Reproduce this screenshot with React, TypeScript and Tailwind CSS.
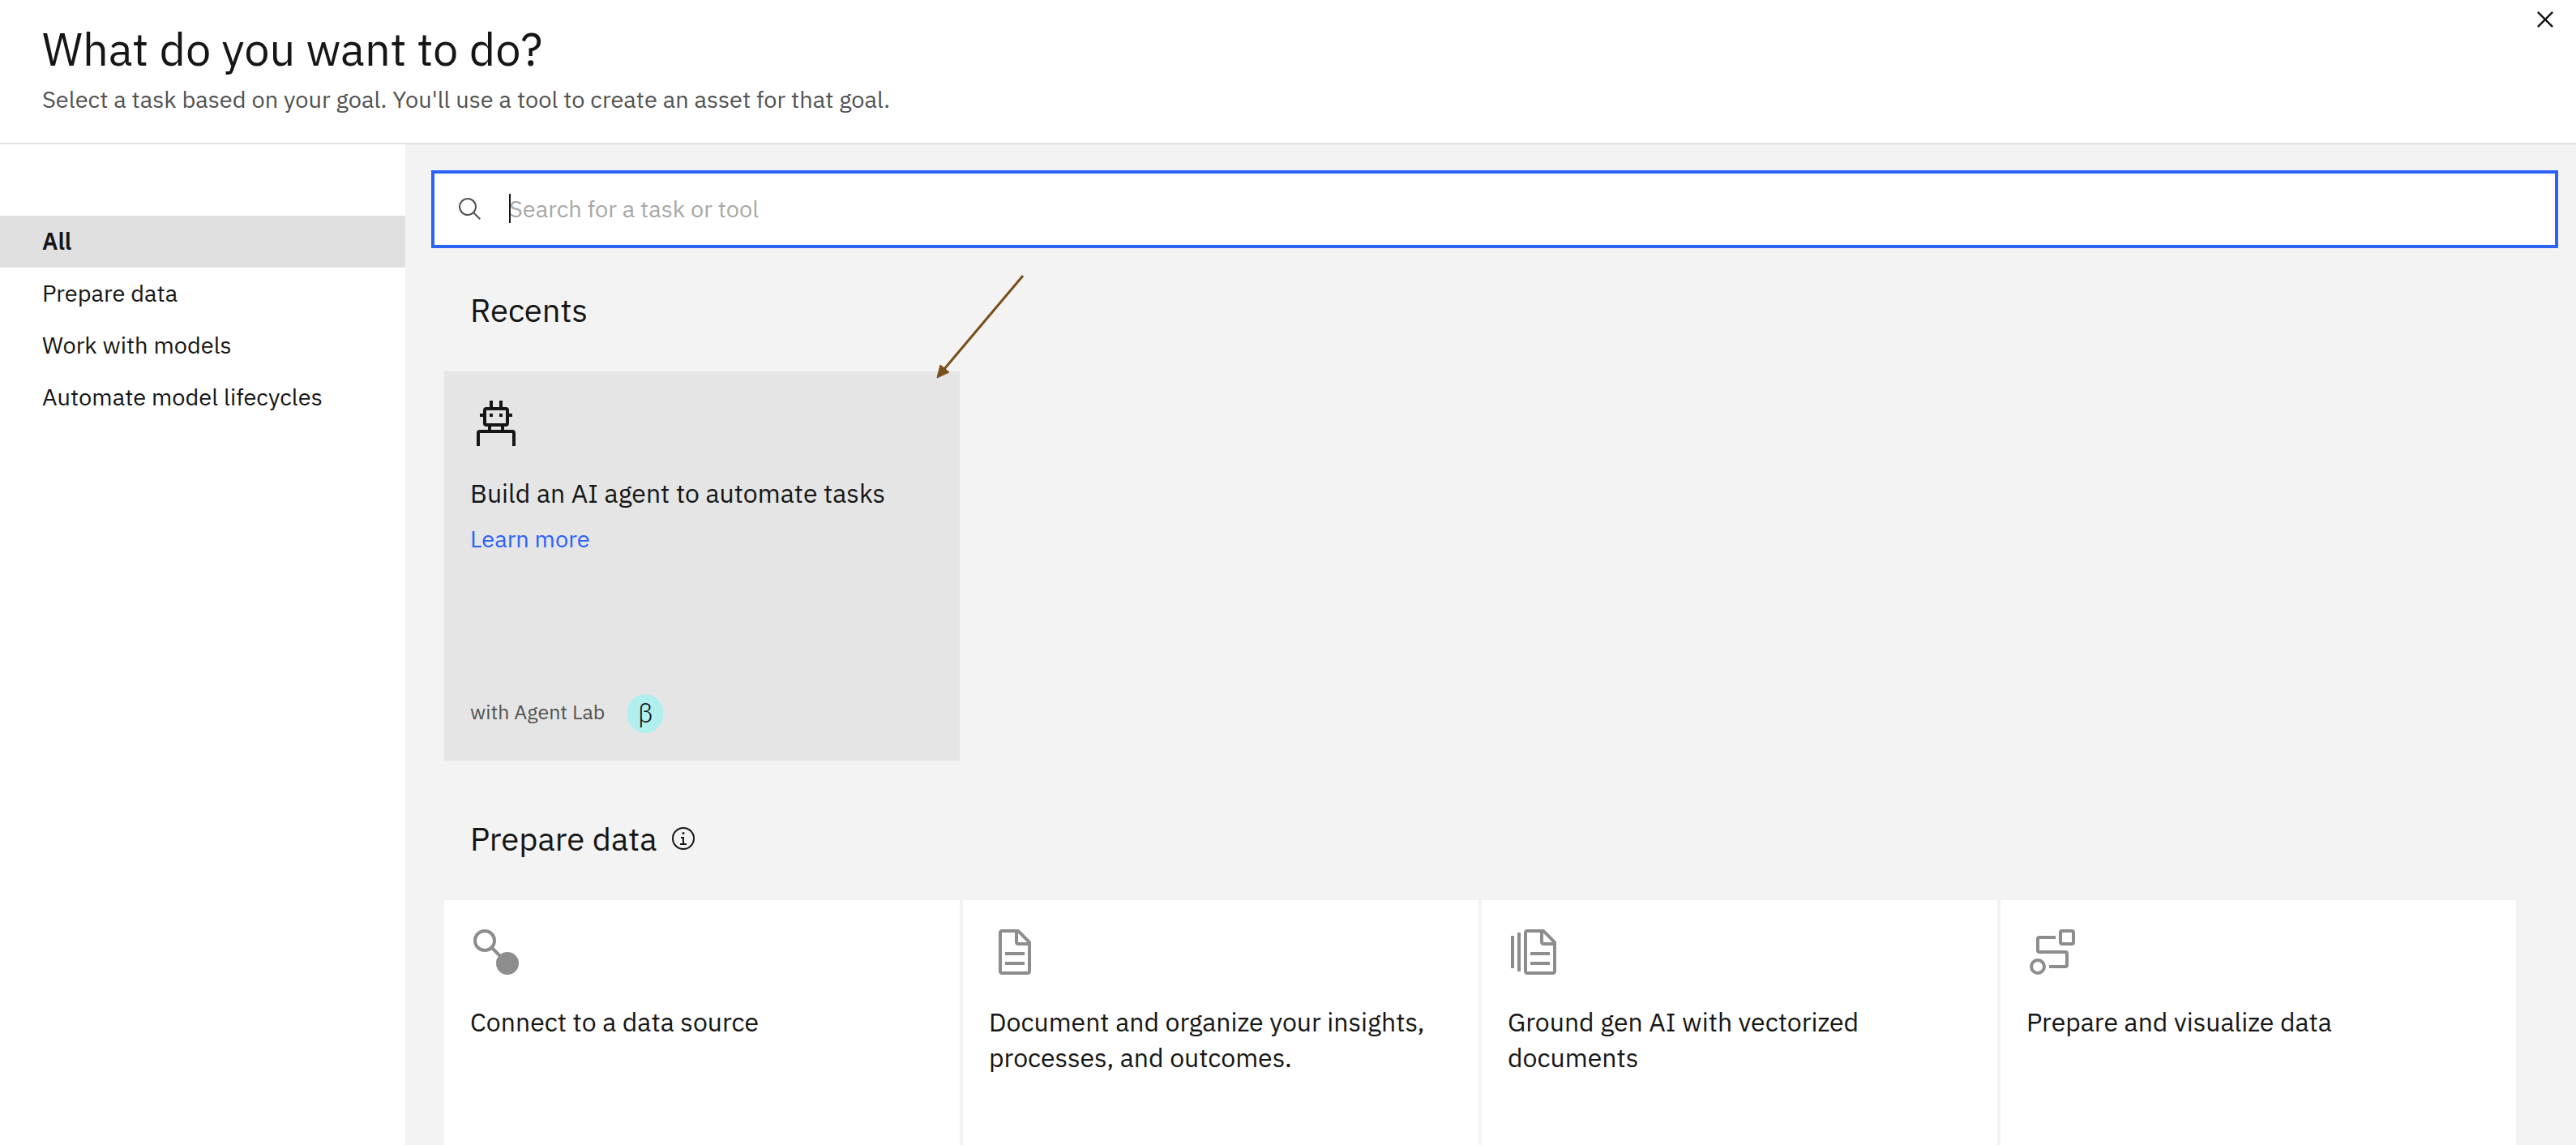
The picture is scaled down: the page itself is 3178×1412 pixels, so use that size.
import type { ReactNode } from "react";

function Icon({ className, children }: { className: string; children: ReactNode }) {
  return (
    <svg viewBox="0 0 32 32" fill="currentColor" aria-hidden="true" className={className}>
      {children}
    </svg>
  );
}

const agentIcon = (
  <Icon className="size-16 text-[#161616]">
    <path d="M12 2h2v4h-2zM18 2h2v4h-2zM6 10h2v2H6zM24 10h2v2h-2zM12 10h2v2h-2zM18 10h2v2h-2zM11 18h2v2h-2zM19 18h2v2h-2z" />
    <rect x="9" y="7" width="14" height="10" rx="1" fill="none" stroke="currentColor" strokeWidth="2" />
    <path d="M5 30v-8a1 1 0 0 1 1-1h20a1 1 0 0 1 1 1v8" fill="none" stroke="currentColor" strokeWidth="2" />
  </Icon>
);

const connectIcon = (
  <Icon className="size-16 text-[#8d8d8d]">
    <circle cx="9" cy="9" r="6" fill="none" stroke="currentColor" strokeWidth="2" />
    <path d="M13 13l6 6" stroke="currentColor" strokeWidth="2" />
    <circle cx="23" cy="23" r="7" />
  </Icon>
);

const pagePath =
  "M25.7 9.3l-7-7C18.5 2.1 18.3 2 18 2H8C6.9 2 6 2.9 6 4v24c0 1.1.9 2 2 2h16c1.1 0 2-.9 2-2V10c0-.3-.1-.5-.3-.7zM18 4.4l5.6 5.6H18V4.4zM24 28H8V4h8v6c0 1.1.9 2 2 2h6v16zM10 22h12v2H10zM10 16h12v2H10z";

const documentIcon = (
  <Icon className="size-16 text-[#8d8d8d]">
    <path d={pagePath} />
  </Icon>
);

const vectorIcon = (
  <Icon className="size-16 text-[#8d8d8d]">
    <path d="M2 6h2v20H2zM6 4h2v24H6z" />
    <path transform="translate(4 0)" d={pagePath} />
  </Icon>
);

const flowIcon = (
  <Icon className="size-16 text-[#8d8d8d]">
    <g fill="none" stroke="currentColor" strokeWidth="2">
      <rect x="21" y="3" width="8" height="8" rx="1" />
      <circle cx="7" cy="25" r="4" />
      <path d="M18 7H8a1 1 0 0 0-1 1v7a1 1 0 0 0 1 1h16a1 1 0 0 1 1 1v7a1 1 0 0 1-1 1H14" />
    </g>
  </Icon>
);

const categories = ["All", "Prepare data", "Work with models", "Automate model lifecycles"];

const prepareTasks = [
  { title: "Connect to a data source", icon: connectIcon },
  { title: "Document and organize your insights, processes, and outcomes.", icon: documentIcon },
  { title: "Ground gen AI with vectorized documents", icon: vectorIcon },
  { title: "Prepare and visualize data", icon: flowIcon },
];

function Pointer() {
  return (
    <svg
      viewBox="0 0 112 130"
      aria-hidden="true"
      className="pointer-events-none absolute -top-[120px] -right-[80px] h-[130px] w-[112px] text-[#784f17]"
    >
      <path d="M110 2L13 117" stroke="currentColor" strokeWidth="3" />
      <path d="M4 128L8 112L19 121Z" fill="currentColor" stroke="currentColor" />
    </svg>
  );
}

export default function App() {
  return (
    <div className="flex h-screen flex-col overflow-hidden bg-white font-['IBM_Plex_Sans',Roboto,sans-serif] text-[29px] leading-9 text-[#161616]">
      <header className="flex shrink-0 items-start justify-between border-b-2 border-[#e0e0e0]">
        <div className="flex flex-col gap-2 pt-6 pb-9 pl-[52px]">
          <h1 className="text-[56px] leading-[72px]">What do you want to do?</h1>
          <p className="text-[#525252]">
            Select a task based on your goal. You'll use a tool to create an asset for that goal.
          </p>
        </div>
        <button type="button" aria-label="Close" className="mt-1 mr-[18px]">
          <Icon className="size-10">
            <path d="M17.4 16L24 9.4 22.6 8 16 14.6 9.4 8 8 9.4l6.6 6.6L8 22.6 9.4 24l6.6-6.6 6.6 6.6 1.4-1.4z" />
          </Icon>
        </button>
      </header>

      <div className="flex min-h-0 flex-1">
        <nav aria-label="Task categories" className="w-[500px] shrink-0 pt-[88px]">
          <ul>
            {categories.map((name, i) => (
              <li key={name}>
                <a
                  href="#"
                  aria-current={i === 0 ? "page" : undefined}
                  className={
                    i === 0
                      ? "flex h-16 items-center bg-[#e0e0e0] pb-0.5 pl-[52px] font-semibold"
                      : "flex h-16 items-center pb-0.5 pl-[52px]"
                  }
                >
                  {name}
                </a>
              </li>
            ))}
          </ul>
        </nav>

        <main className="min-w-0 flex-1 overflow-hidden bg-[#f3f3f3] pt-8">
          <div className="mr-[22px] ml-8 flex h-24 items-center border-4 border-[#2b62f9] bg-white pl-7">
            <Icon className="size-8 shrink-0 text-[#525252]">
              <path d="M29 27.586l-7.552-7.552a11.018 11.018 0 1 0-1.414 1.414L27.586 29zM4 13a9 9 0 1 1 9 9 9.01 9.01 0 0 1-9-9z" />
            </Icon>
            <div className="relative ml-8 flex-1 pb-0.5">
              <input
                type="text"
                aria-label="Search for a task or tool"
                placeholder="Search for a task or tool"
                className="block h-9 w-full caret-transparent outline-none placeholder:text-[#a8a8a8]"
              />
              <span aria-hidden="true" className="absolute top-0 left-0 h-9 w-0.5 bg-[#161616]" />
            </div>
          </div>

          <section className="mt-[52px] mr-[74px] ml-12">
            <h2 className="pl-8 text-[40px] leading-[48px]">Recents</h2>
            <div className="mt-[52px] grid grid-cols-4 gap-1">
              <article className="relative flex min-h-[480px] flex-col items-start bg-[#e5e5e5] px-8 pt-8 pb-[34px]">
                {agentIcon}
                <h3 className="mt-8 text-[32px] leading-[44px]">Build an AI agent to automate tasks</h3>
                <a href="#" className="mt-4 text-[#2b62f9]">
                  Learn more
                </a>
                <div className="mt-auto flex items-center gap-7 text-[25px] text-[#525252]">
                  <span className="pb-1">with Agent Lab</span>
                  <span className="flex h-12 w-11 items-center justify-center rounded-full bg-[#b0efee] pb-0.5 text-[32px] font-light text-[#161616]">
                    β
                  </span>
                </div>
                <Pointer />
              </article>
            </div>
          </section>

          <section className="mt-[72px] mr-[74px] ml-12">
            <div className="flex items-center gap-4 pl-8">
              <h2 className="text-[40px] leading-[48px]">Prepare data</h2>
              <button type="button" aria-label="About preparing data">
                <Icon className="size-8">
                  <circle cx="16" cy="16" r="13" fill="none" stroke="currentColor" strokeWidth="2" />
                  <path d="M17 22v-8h-4v2h2v6h-3v2h8v-2zM16 8a1.5 1.5 0 1 0 1.5 1.5A1.5 1.5 0 0 0 16 8z" />
                </Icon>
              </button>
            </div>
            <div className="mt-[52px] grid grid-cols-4 gap-1">
              {prepareTasks.map((task) => (
                <article key={task.title} className="flex min-h-[480px] flex-col items-start bg-white p-8">
                  {task.icon}
                  <h3 className="mt-8 text-[32px] leading-[44px]">{task.title}</h3>
                </article>
              ))}
            </div>
          </section>
        </main>
      </div>
    </div>
  );
}
